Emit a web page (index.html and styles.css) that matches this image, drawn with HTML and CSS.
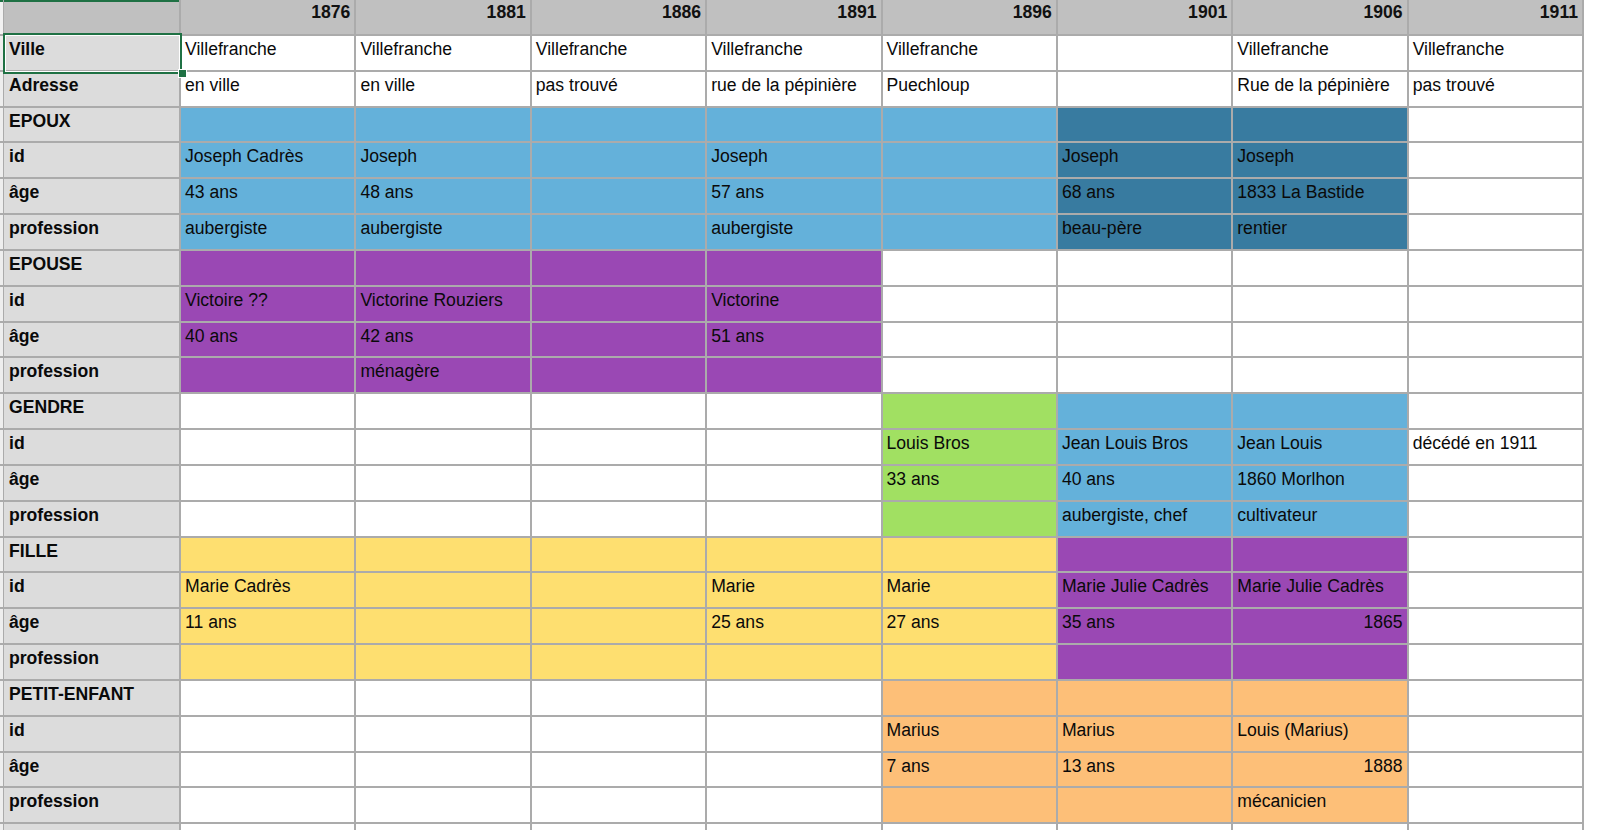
FILE: index.html
```html
<!DOCTYPE html>
<html lang="fr">
<head>
<meta charset="utf-8">
<title>Recensements</title>
<link rel="stylesheet" href="styles.css">
</head>
<body>
<div class="sheet">
  <div class="grid">
    <!-- header -->
    <div class="c strip hdr-strip"></div><div class="c lbl hdr corner"></div>
    <div class="c hdr">1876</div><div class="c hdr">1881</div><div class="c hdr">1886</div><div class="c hdr">1891</div><div class="c hdr">1896</div><div class="c hdr">1901</div><div class="c hdr">1906</div><div class="c hdr">1911</div><div class="c fill"></div>

    <div class="c strip"></div><div class="c lbl">Ville</div>
    <div class="c">Villefranche</div><div class="c">Villefranche</div><div class="c">Villefranche</div><div class="c">Villefranche</div><div class="c">Villefranche</div><div class="c"></div><div class="c">Villefranche</div><div class="c">Villefranche</div><div class="c fill"></div>

    <div class="c strip"></div><div class="c lbl">Adresse</div>
    <div class="c">en ville</div><div class="c">en ville</div><div class="c">pas trouvé</div><div class="c">rue de la pépinière</div><div class="c">Puechloup</div><div class="c"></div><div class="c">Rue de la pépinière</div><div class="c">pas trouvé</div><div class="c fill"></div>

    <div class="c strip"></div><div class="c lbl">EPOUX</div>
    <div class="c b"></div><div class="c b"></div><div class="c b"></div><div class="c b"></div><div class="c b"></div><div class="c db"></div><div class="c db"></div><div class="c"></div><div class="c fill"></div>

    <div class="c strip"></div><div class="c lbl">id</div>
    <div class="c b">Joseph Cadrès</div><div class="c b">Joseph</div><div class="c b"></div><div class="c b">Joseph</div><div class="c b"></div><div class="c db">Joseph</div><div class="c db">Joseph</div><div class="c"></div><div class="c fill"></div>

    <div class="c strip"></div><div class="c lbl">âge</div>
    <div class="c b">43 ans</div><div class="c b">48 ans</div><div class="c b"></div><div class="c b">57 ans</div><div class="c b"></div><div class="c db">68 ans</div><div class="c db">1833 La Bastide</div><div class="c"></div><div class="c fill"></div>

    <div class="c strip"></div><div class="c lbl">profession</div>
    <div class="c b">aubergiste</div><div class="c b">aubergiste</div><div class="c b"></div><div class="c b">aubergiste</div><div class="c b"></div><div class="c db">beau-père</div><div class="c db">rentier</div><div class="c"></div><div class="c fill"></div>

    <div class="c strip"></div><div class="c lbl">EPOUSE</div>
    <div class="c p"></div><div class="c p"></div><div class="c p"></div><div class="c p"></div><div class="c"></div><div class="c"></div><div class="c"></div><div class="c"></div><div class="c fill"></div>

    <div class="c strip"></div><div class="c lbl">id</div>
    <div class="c p">Victoire ??</div><div class="c p">Victorine Rouziers</div><div class="c p"></div><div class="c p">Victorine</div><div class="c"></div><div class="c"></div><div class="c"></div><div class="c"></div><div class="c fill"></div>

    <div class="c strip"></div><div class="c lbl">âge</div>
    <div class="c p">40 ans</div><div class="c p">42 ans</div><div class="c p"></div><div class="c p">51 ans</div><div class="c"></div><div class="c"></div><div class="c"></div><div class="c"></div><div class="c fill"></div>

    <div class="c strip"></div><div class="c lbl">profession</div>
    <div class="c p"></div><div class="c p">ménagère</div><div class="c p"></div><div class="c p"></div><div class="c"></div><div class="c"></div><div class="c"></div><div class="c"></div><div class="c fill"></div>

    <div class="c strip"></div><div class="c lbl">GENDRE</div>
    <div class="c"></div><div class="c"></div><div class="c"></div><div class="c"></div><div class="c g"></div><div class="c b"></div><div class="c b"></div><div class="c"></div><div class="c fill"></div>

    <div class="c strip"></div><div class="c lbl">id</div>
    <div class="c"></div><div class="c"></div><div class="c"></div><div class="c"></div><div class="c g">Louis Bros</div><div class="c b">Jean Louis Bros</div><div class="c b">Jean Louis</div><div class="c">décédé en 1911</div><div class="c fill"></div>

    <div class="c strip"></div><div class="c lbl">âge</div>
    <div class="c"></div><div class="c"></div><div class="c"></div><div class="c"></div><div class="c g">33 ans</div><div class="c b">40 ans</div><div class="c b">1860 Morlhon</div><div class="c"></div><div class="c fill"></div>

    <div class="c strip"></div><div class="c lbl">profession</div>
    <div class="c"></div><div class="c"></div><div class="c"></div><div class="c"></div><div class="c g"></div><div class="c b">aubergiste, chef</div><div class="c b">cultivateur</div><div class="c"></div><div class="c fill"></div>

    <div class="c strip"></div><div class="c lbl">FILLE</div>
    <div class="c y"></div><div class="c y"></div><div class="c y"></div><div class="c y"></div><div class="c y"></div><div class="c p"></div><div class="c p"></div><div class="c"></div><div class="c fill"></div>

    <div class="c strip"></div><div class="c lbl">id</div>
    <div class="c y">Marie Cadrès</div><div class="c y"></div><div class="c y"></div><div class="c y">Marie</div><div class="c y">Marie</div><div class="c p">Marie Julie Cadrès</div><div class="c p">Marie Julie Cadrès</div><div class="c"></div><div class="c fill"></div>

    <div class="c strip"></div><div class="c lbl">âge</div>
    <div class="c y">11 ans</div><div class="c y"></div><div class="c y"></div><div class="c y">25 ans</div><div class="c y">27 ans</div><div class="c p">35 ans</div><div class="c p num">1865</div><div class="c"></div><div class="c fill"></div>

    <div class="c strip"></div><div class="c lbl">profession</div>
    <div class="c y"></div><div class="c y"></div><div class="c y"></div><div class="c y"></div><div class="c y"></div><div class="c p"></div><div class="c p"></div><div class="c"></div><div class="c fill"></div>

    <div class="c strip"></div><div class="c lbl">PETIT-ENFANT</div>
    <div class="c"></div><div class="c"></div><div class="c"></div><div class="c"></div><div class="c o"></div><div class="c o"></div><div class="c o"></div><div class="c"></div><div class="c fill"></div>

    <div class="c strip"></div><div class="c lbl">id</div>
    <div class="c"></div><div class="c"></div><div class="c"></div><div class="c"></div><div class="c o">Marius</div><div class="c o">Marius</div><div class="c o">Louis (Marius)</div><div class="c"></div><div class="c fill"></div>

    <div class="c strip"></div><div class="c lbl">âge</div>
    <div class="c"></div><div class="c"></div><div class="c"></div><div class="c"></div><div class="c o">7 ans</div><div class="c o">13 ans</div><div class="c o num">1888</div><div class="c"></div><div class="c fill"></div>

    <div class="c strip"></div><div class="c lbl">profession</div>
    <div class="c"></div><div class="c"></div><div class="c"></div><div class="c"></div><div class="c o"></div><div class="c o"></div><div class="c o">mécanicien</div><div class="c"></div><div class="c fill"></div>

    <div class="c strip"></div><div class="c lbl">AUTRE</div>
    <div class="c"></div><div class="c"></div><div class="c"></div><div class="c"></div><div class="c"></div><div class="c"></div><div class="c"></div><div class="c"></div><div class="c fill"></div>
  </div>
  <div class="selection"><div class="handle"></div></div>
</div>
</body>
</html>
```

FILE: styles.css
```css
html, body {
  margin: 0;
  padding: 0;
  background: #ffffff;
  overflow: hidden;
}

.sheet {
  position: relative;
  width: 1600px;
  height: 830px;
  overflow: hidden;
  font-family: "Liberation Sans", Arial, Helvetica, sans-serif;
  font-size: 17.6px;
  color: #0a0a0a;
}

.grid {
  display: grid;
  grid-template-columns: 4px 177px repeat(8, 175.375px) 1fr;
  grid-template-rows: 36px;
  grid-auto-rows: 35.83px;
}

.c {
  box-sizing: border-box;
  border-right: 2px solid #ababab;
  border-bottom: 2px solid #ababab;
  padding: 3px 4px 0 4px;
  line-height: 20px;
  white-space: nowrap;
  overflow: hidden;
  background: #ffffff;
}

.strip {
  background: #eeeeee;
  border-right-width: 1px;
  padding: 0;
}

.hdr-strip {
  background: #f2f2f2;
  box-shadow: inset 0 2px 0 #1f7144;
}

.lbl {
  background: #dcdcdc;
  font-weight: bold;
  padding-left: 5px;
}

.hdr {
  background: #c0c0c0;
  font-weight: bold;
  text-align: right;
  color: #111111;
  padding-top: 2px;
}

.corner {
  box-shadow: inset 0 2px 0 #1f7144;
}

.fill {
  border: none;
  background: #ffffff;
}

.num {
  text-align: right;
}

.b { background: #64b1da; }
.db { background: #387ba0; }
.p { background: #9a48b4; }
.g { background: #a1e062; }
.y { background: #fedf70; }
.o { background: #fdbf78; }

.selection {
  position: absolute;
  left: 3px;
  top: 33px;
  width: 179px;
  height: 41px;
  box-sizing: border-box;
  border: 2px solid #1f7144;
  box-shadow: inset 0 0 0 1px #ffffff;
}

.handle {
  position: absolute;
  right: -7px;
  bottom: -6px;
  width: 7px;
  height: 7px;
  background: #1f7144;
  border: 1px solid #ffffff;
}
```
